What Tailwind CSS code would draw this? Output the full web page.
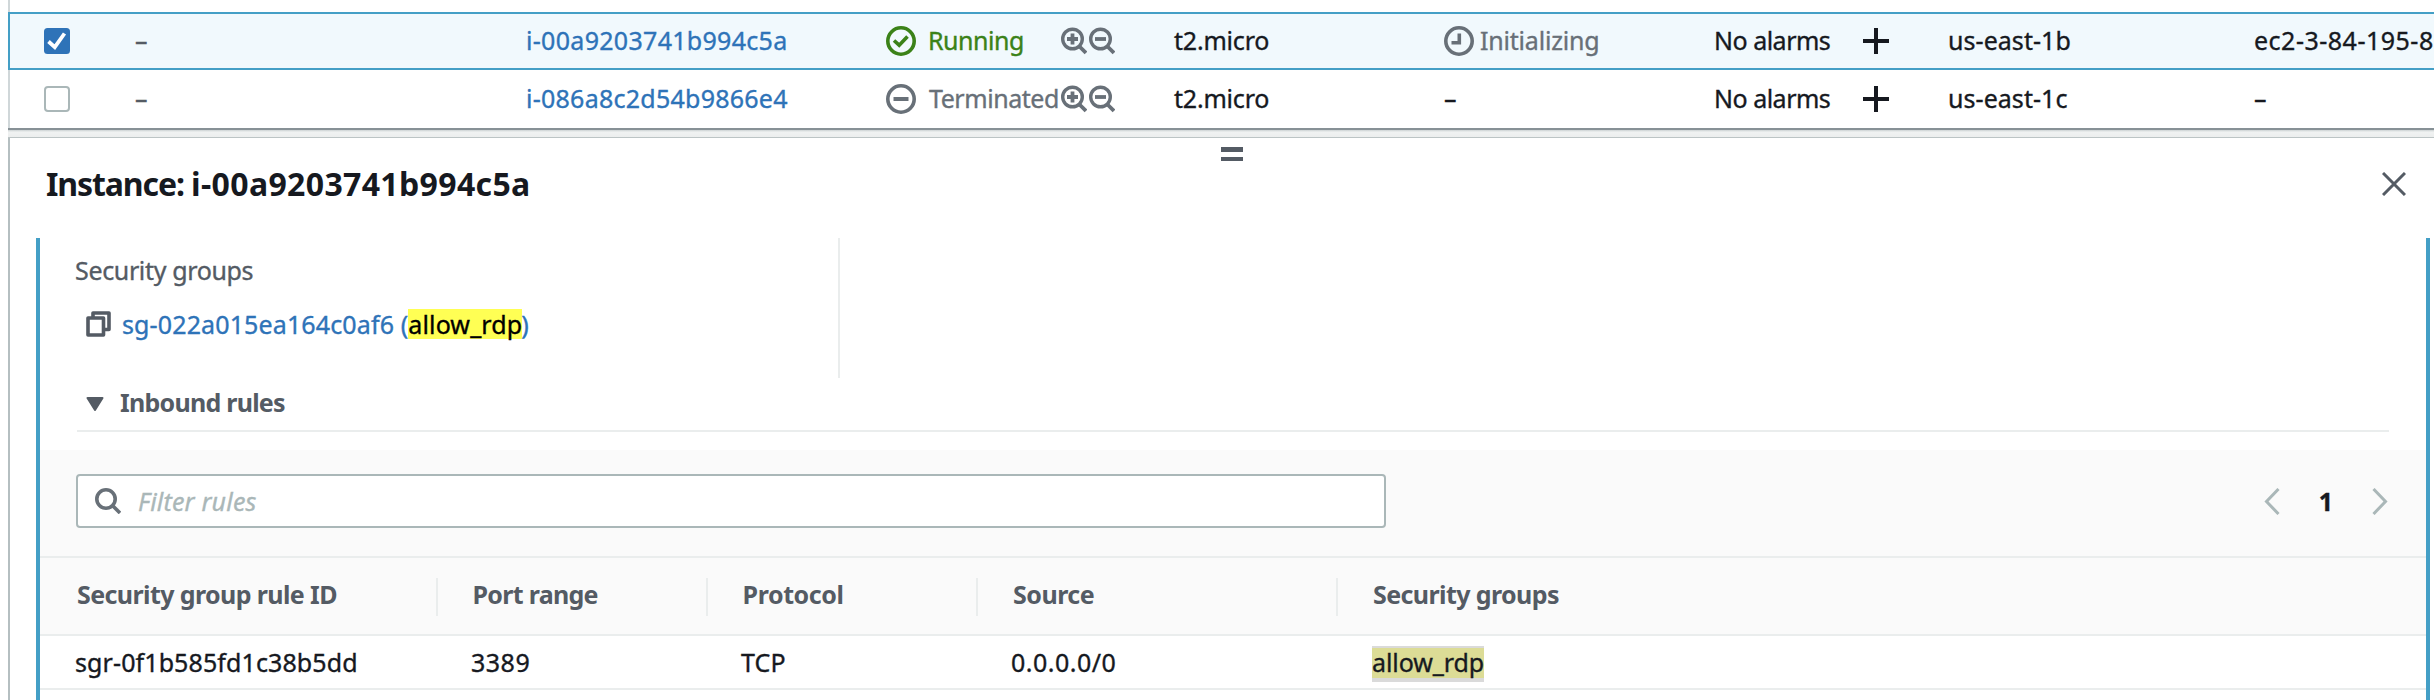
<!DOCTYPE html>
<html lang="en">
<head>
<meta charset="utf-8">
<title>Instances</title>
<script src="https://cdn.jsdelivr.net/npm/@tailwindcss/browser@4"></script>
</head>
<body class="bg-white">
<svg class="hidden">
  <symbol id="zoom-in" viewBox="0 0 26 28"><g fill="none" stroke="#687078"><circle cx="11.5" cy="12" r="9.8" stroke-width="3.4"/><path d="M18.5 19.5 25 26" stroke-width="3.8"/><path d="M6 12h11M11.500 6.500v11" stroke-width="3.8"/></g></symbol>
  <symbol id="zoom-out" viewBox="0 0 26 28"><g fill="none" stroke="#687078"><circle cx="11.500" cy="12" r="9.800" stroke-width="3.4"/><path d="M18.500 19.500 25 26" stroke-width="3.8"/><path d="M6 12h11" stroke-width="3.8"/></g></symbol>
</svg>
<div class="flex h-[700px] w-[2434px] flex-col overflow-hidden bg-white pl-2 text-[25px] text-[#16191f] [-webkit-text-stroke:0.35px] [font-family:'Noto_Sans',sans-serif]">
  <div class="h-3 shrink-0 border-l-2 border-[#d0d7d9]"></div>

  <!-- selected instance -->
  <div class="grid h-[58px] shrink-0 grid-cols-[91px_391px_360px_288px_270px_270px_234px_306px_1fr] items-center whitespace-nowrap border-y-2 border-l-2 border-[#449fc6] bg-[#f1f9fd] pl-[34px] leading-[34px] [&_span]:pb-0.5">
    <svg class="size-[26px]" viewBox="0 0 26 26"><rect width="26" height="26" rx="3.500" fill="#2e73b8"/><path d="M4.500 13.500 10.800 19.200 20.500 5.500" fill="none" stroke="#fff" stroke-width="3.800"/></svg>
    <span class="text-[#545b64]">–</span>
    <span class="tracking-[0.3px] text-[#2e73b8]">i-00a9203741b994c5a</span>
    <div class="flex items-center">
      <svg class="size-[30px]" viewBox="0 0 30 30" fill="none" stroke="#3b8218"><circle cx="15" cy="15" r="13.200" stroke-width="3.600"/><path d="M8 14.500 13.200 19.200 21.500 10.500" stroke-width="3.600"/></svg>
      <span class="ml-3 w-[133px] tracking-[-0.45px] text-[#3b8218]">Running</span>
      <svg class="h-7 w-[26px]"><use href="#zoom-in"/></svg>
      <svg class="ml-0.5 h-7 w-[26px]"><use href="#zoom-out"/></svg>
    </div>
    <span class="tracking-[-0.2px]">t2.micro</span>
    <div class="flex items-center gap-[6px] text-[#687078]">
      <svg class="size-[30px]" viewBox="0 0 30 30" fill="none" stroke="#687078"><circle cx="15" cy="15" r="13.200" stroke-width="3.600"/><path d="M15.300 7.500v9.300H7.500" stroke-width="3.600"/></svg>
      <span class="tracking-[-0.2px]">Initializing</span>
    </div>
    <div class="flex items-center">
      <span class="w-[149px] tracking-[-0.5px]">No alarms</span>
      <svg class="size-[26px]" viewBox="0 0 26 26" stroke="#16191f" stroke-width="4"><path d="M0 13h26M13 0v26"/></svg>
    </div>
    <span class="tracking-[0.05px]">us-east-1b</span>
    <span class="tracking-[0.5px]">ec2-3-84-195-8</span>
  </div>

  <!-- terminated instance -->
  <div class="grid h-[58px] shrink-0 grid-cols-[91px_391px_360px_288px_270px_270px_234px_306px_1fr] items-center whitespace-nowrap border-l-2 border-[#d0d7d9] pl-[34px] leading-[34px] [&_span]:pb-0.5">
    <span class="size-[26px] rounded-[4px] border-2 border-[#aab7b8] bg-white"></span>
    <span class="text-[#545b64]">–</span>
    <span class="tracking-[0.25px] text-[#2e73b8]">i-086a8c2d54b9866e4</span>
    <div class="flex items-center">
      <svg class="size-[30px]" viewBox="0 0 30 30" fill="none" stroke="#687078"><circle cx="15" cy="15" r="13.200" stroke-width="3.600"/><path d="M7.500 15h15" stroke-width="4"/></svg>
      <span class="ml-[13px] w-[132px] tracking-[-0.45px] text-[#687078]">Terminated</span>
      <svg class="h-7 w-[26px]"><use href="#zoom-in"/></svg>
      <svg class="ml-0.5 h-7 w-[26px]"><use href="#zoom-out"/></svg>
    </div>
    <span class="tracking-[-0.2px]">t2.micro</span>
    <span>–</span>
    <div class="flex items-center">
      <span class="w-[149px] tracking-[-0.5px]">No alarms</span>
      <svg class="size-[26px]" viewBox="0 0 26 26" stroke="#16191f" stroke-width="4"><path d="M0 13h26M13 0v26"/></svg>
    </div>
    <span class="tracking-[0.05px]">us-east-1c</span>
    <span>–</span>
  </div>

  <!-- split panel edge -->
  <div class="h-[10px] shrink-0 border-b border-t-2 border-b-[#bcc4c5] border-t-[#879196] bg-linear-to-b from-[#ccd2d3] via-[#f0f2f2] via-30% to-[#eceeee]"></div>

  <div class="relative flex flex-1 flex-col border-l-2 border-[#b5bfc1]">
    <div class="absolute left-[1211px] top-[9px] flex w-[22px] flex-col gap-[5px]"><span class="h-[4.5px] bg-[#545b64]"></span><span class="h-[4.5px] bg-[#545b64]"></span></div>
    <div class="flex h-[100px] shrink-0 items-center justify-between pb-[9px] pl-9 pr-7">
      <h2 class="whitespace-nowrap text-[32px] font-bold leading-[44px] tracking-[0.35px] [-webkit-text-stroke:0px]"><span class="tracking-[-1.1px]">Instance: </span>i-00a9203741b994c5a</h2>
      <svg class="size-6" viewBox="0 0 24 24" stroke="#545b64" stroke-width="3"><path d="M1 1l22 22M23 1 1 23"/></svg>
    </div>

    <div class="ml-[26px] mr-1 flex flex-1 flex-col border-x-4 border-[#449fc6]">
      <div class="flex h-[140px] w-[800px] flex-col gap-5 border-r-2 border-[#eaeded] pl-[35px] pt-[15px]">
        <div class="h-[34px] leading-[34px] tracking-[-0.35px] text-[#545b64]">Security groups</div>
        <div class="flex h-[34px] items-center whitespace-nowrap pl-[11px] leading-[34px] text-[#2e73b8]">
          <svg class="h-[26px] w-[25px]" viewBox="0 0 25 26" fill="none" stroke="#545b64" stroke-width="3.600"><path d="M2 7h15.500v17H2z" stroke-linejoin="round"/><path d="M7 6V2h16v16.500h-5" stroke-linejoin="round"/></svg>
          <span class="ml-[11px] whitespace-pre tracking-[0.13px]">sg-022a015ea164c0af6 (</span><mark class="h-[30px] w-[114px] bg-[#ffff54] leading-[30px] tracking-[0.12px] text-black">allow_rdp</mark><span class="-ml-px">)</span>
        </div>
      </div>

      <div class="mx-[37px] flex h-[54px] items-center border-b-2 border-[#eaeded] pb-1 pl-[9px]">
        <svg class="mt-1 h-[14px] w-[18px]" viewBox="0 0 18 14"><path d="M1.500 1h15L9 13z" fill="#545b64" stroke="#545b64" stroke-width="2" stroke-linejoin="round"/></svg>
        <h3 class="ml-4 font-bold leading-[34px] tracking-[-0.75px] text-[#545b64] [-webkit-text-stroke:0px]">Inbound rules</h3>
      </div>

      <div class="mt-[18px] flex h-[108px] items-start justify-between border-b-2 border-[#eaeded] bg-[#fafafa] pl-9 pr-[38px] pt-6">
        <div class="flex h-[54px] w-[1310px] items-center rounded-[4px] border-2 border-[#aab7b8] bg-white pl-[17px]">
          <svg class="size-[26px]" viewBox="0 0 26 26" fill="none" stroke="#687078" stroke-width="3.600"><circle cx="11" cy="11" r="9.200"/><path d="M17.500 17.500 25 25"/></svg>
          <span class="ml-[17px] italic leading-[34px] tracking-[0.2px] text-[#aab7b8]">Filter rules</span>
        </div>
        <div class="flex h-[54px] items-center">
          <svg class="h-[27px] w-4" viewBox="0 0 16 27" fill="none" stroke="#aab7b8" stroke-width="3"><path d="M14.500 1 2.500 13.500l12 12.500"/></svg>
          <span class="w-[92px] pb-px text-center font-bold leading-[34px]">1</span>
          <svg class="h-[27px] w-4" viewBox="0 0 16 27" fill="none" stroke="#aab7b8" stroke-width="3"><path d="M1.500 1l12 12.500-12 12.500"/></svg>
        </div>
      </div>

      <div class="grid h-[78px] grid-cols-[398px_270px_270px_360px_1fr] items-start whitespace-nowrap border-b-2 border-[#eaeded] bg-[#fafafa] pt-5 font-bold leading-[32px] text-[#545b64] [-webkit-text-stroke:0px]">
        <div class="h-[38px] border-r-2 border-[#eaeded] pl-[37px] tracking-[-0.6px]">Security group rule ID</div>
        <div class="h-[38px] border-r-2 border-[#eaeded] pl-[34.5px] tracking-[-0.7px]">Port range</div>
        <div class="h-[38px] border-r-2 border-[#eaeded] pl-[34.5px] tracking-[-0.4px]">Protocol</div>
        <div class="h-[38px] border-r-2 border-[#eaeded] pl-[35px] tracking-[-0.5px]">Source</div>
        <div class="h-[38px] pl-[35px] tracking-[-0.6px]">Security groups</div>
      </div>
      <div class="grid h-[54px] grid-cols-[398px_270px_270px_360px_1fr] items-center whitespace-nowrap border-b-2 border-[#eaeded] leading-[34px]">
        <span class="pl-[35px] tracking-[0.1px]">sgr-0f1b585fd1c38b5dd</span>
        <span class="pl-[33px] tracking-[0.5px]">3389</span>
        <span class="pl-[33px] tracking-[0.2px]">TCP</span>
        <span class="pl-[33px] tracking-[0.5px]">0.0.0.0/0</span>
        <div class="ml-[34px] mt-1 h-9 w-[112px] bg-[#dadada] pt-0.5"><mark class="block h-[30px] bg-[#dcdc96] leading-[28px] tracking-[-0.1px] text-[#16191f]">allow_rdp</mark></div>
      </div>
    </div>
  </div>
</div>
</body>
</html>
